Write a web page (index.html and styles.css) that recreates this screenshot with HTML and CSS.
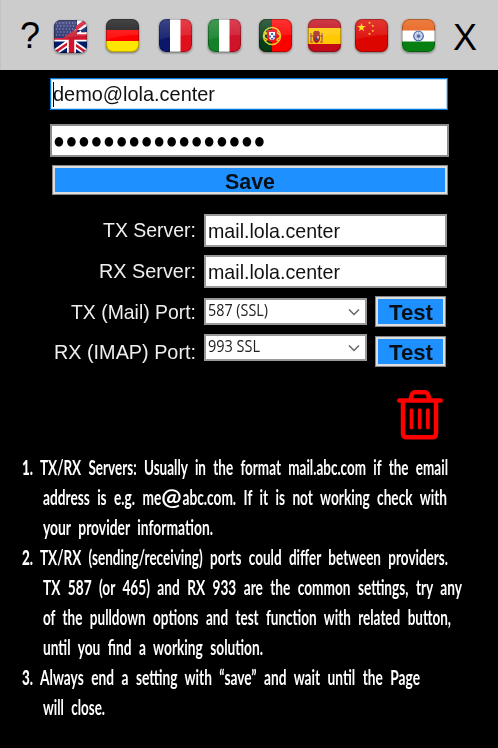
FILE: index.html
```html
<!DOCTYPE html>
<html lang="en">
<head>
<meta charset="utf-8">
<title>Mail settings</title>
<link rel="stylesheet" href="styles.css">
</head>
<body>
<svg class="defs" width="0" height="0" aria-hidden="true">
  <defs>
    <clipPath id="round"><rect width="33" height="33" rx="7"/></clipPath>
    <linearGradient id="gloss" x1="0" y1="0" x2="0" y2="1">
      <stop offset="0" stop-color="#fff" stop-opacity=".2"/>
      <stop offset="1" stop-color="#fff" stop-opacity=".06"/>
    </linearGradient>
    <g id="shine">
      <path d="M0 0H33V16Q16 16 0 21Z" fill="url(#gloss)"/>
      <rect x=".5" y=".5" width="32" height="32" rx="7" fill="none" stroke="#000" stroke-opacity=".25"/>
    </g>
    <path id="star" d="M0-1 .23-.31 .95-.31 .36 .12 .59 .81 0 .38-.59 .81-.36 .12-.95-.31-.23-.31Z"/>
  </defs>
</svg>
<header class="bar">
  <span class="sign help">?</span>
  <svg class="flag uk" viewBox="0 0 33 33"><g clip-path="url(#round)">
    <rect width="33" height="33" fill="#001b69"/>
    <path d="M0 10 33 33M33 10 0 33" stroke="#fff" stroke-width="6"/>
    <path d="M0 10 33 33M33 10 0 33" stroke="#d0142c" stroke-width="2.500"/>
    <path d="M23 0 H33V10H23Z" fill="#fff"/><path d="M22 11 33 3V0H30L22 6Z" fill="#d0142c"/><path d="M27 10 33 6V12H27Z" fill="#001b69"/>
    <path d="M0 17H33M17.500 0V33" stroke="#fff" stroke-width="9"/>
    <path d="M0 17H33M17.500 0V33" stroke="#d0142c" stroke-width="5.500"/>
    <path d="M0 0H22V9L9 18H0Z" fill="#222967"/>
    <path d="M2 3H22M3 6H22M2 9H21M3 12H17M2 15H13" stroke="#9299cc" stroke-width="1.200" stroke-dasharray="1.200 2"/>
    <path d="M23 9 9 18H23Z" fill="#c51a2e"/>
    <use href="#shine"/></g></svg>
  <svg class="flag de" viewBox="0 0 33 33"><g clip-path="url(#round)">
    <rect width="33" height="33" fill="#171717"/><rect y="11" width="33" height="11" fill="#f00"/><rect y="22" width="33" height="11" fill="#ffe600"/>
    <use href="#shine"/></g></svg>
  <svg class="flag fr" viewBox="0 0 33 33"><g clip-path="url(#round)">
    <rect width="33" height="33" fill="#fff"/><rect width="11" height="33" fill="#0b1768"/><rect x="21.500" width="12" height="33" fill="#e0101d"/>
    <use href="#shine"/></g></svg>
  <svg class="flag it" viewBox="0 0 33 33"><g clip-path="url(#round)">
    <rect width="33" height="33" fill="#fff"/><rect width="11" height="33" fill="#148028"/><rect x="21.500" width="12" height="33" fill="#cf1329"/>
    <use href="#shine"/></g></svg>
  <svg class="flag pt" viewBox="0 0 33 33"><g clip-path="url(#round)">
    <rect width="33" height="33" fill="#f00"/><rect width="13" height="33" fill="#053d16"/>
    <g fill="none" stroke="#e6cd22" stroke-width="1.500"><circle cx="13" cy="17" r="8.500"/><ellipse cx="13" cy="17" rx="8" ry="4"/><path d="M5 13 20 22M6 22 20 12"/></g>
    <path d="M8 11H18V19Q17 23 13 23T8 19Z" fill="#e81420"/><path d="M10 13H16V19Q15 21 13 21T10 19Z" fill="#fff"/>
    <path d="M12.100 14h2v2h-2zM10 16.500h2v2h-2zM14 16.500h2v2h-2zM12.100 19h2v1.500h-2z" fill="#3157b3"/>
    <use href="#shine"/></g></svg>
  <svg class="flag es" viewBox="0 0 33 33"><g clip-path="url(#round)">
    <rect width="33" height="33" fill="#c20a18"/><rect y="9" width="33" height="16" fill="#ffc800"/>
    <path d="M3 14V22M14 14V22" stroke="#9b7870" stroke-width="1.600"/><path d="M2 17H5M12 17H15M2 23H5M12 23H15" stroke="#b12d22"/>
    <path d="M5 14Q6 11 8.500 12Q11 11 12 14L11.500 16H5.500Z" fill="#a63224"/><path d="M5 16H12V20Q11 24 8.500 24T5 20Z" fill="#a72a29"/><path d="M9 17H11V20H9Z" fill="#d5a0a0"/><circle cx="8.500" cy="20" r="1.300" fill="#384c87"/>
    <use href="#shine"/></g></svg>
  <svg class="flag cn" viewBox="0 0 33 33"><g clip-path="url(#round)">
    <rect width="33" height="33" fill="#dc0500"/>
    <g fill="#ffde00"><use href="#star" transform="translate(6.500 8.500) scale(4.500)"/><use href="#star" transform="translate(14.500 4) scale(1.600)"/><use href="#star" transform="translate(17.800 7) scale(1.600)"/><use href="#star" transform="translate(17.800 12) scale(1.600)"/><use href="#star" transform="translate(14.500 15) scale(1.600)"/></g>
    <use href="#shine"/></g></svg>
  <svg class="flag in" viewBox="0 0 33 33"><g clip-path="url(#round)">
    <rect width="33" height="33" fill="#fff"/><rect width="33" height="11.500" fill="#e75c12"/><rect y="22.500" width="33" height="11" fill="#078011"/>
    <circle cx="16.500" cy="17" r="4.800" fill="#d6dced" stroke="#4864a9" stroke-width="1.300"/><path d="M12 17H21M16.500 12.500V21.500M13.300 13.800 19.700 20.200M19.700 13.800 13.300 20.200" stroke="#8799c9" stroke-width=".6"/><circle cx="16.500" cy="17" r="1.800" fill="#4864a9"/>
    <use href="#shine"/></g></svg>
  <span class="sign close">X</span>
</header>
<main>
  <div class="field mail"><i class="caret"></i><span class="fit" data-w="162">demo@lola.center</span></div>
  <div class="field pass"><span class="fit dots" data-w="213">●●●●●●●●●●●●●●●●●</span></div>
  <div class="button save"><span class="fit" data-w="50">Save</span></div>
  <div class="row server"><label><span class="fit" data-w="93">TX Server:</span></label><div class="field"><span class="fit" data-w="132">mail.lola.center</span></div></div>
  <div class="row server"><label><span class="fit" data-w="97">RX Server:</span></label><div class="field"><span class="fit" data-w="132">mail.lola.center</span></div></div>
  <div class="row port"><label><span class="fit" data-w="125">TX (Mail) Port:</span></label>
    <div class="select"><span class="fit" data-w="60">587 (SSL)</span><svg viewBox="0 0 12 8"><path d="M1 1.500 6 6.500 11 1.500"/></svg></div>
    <div class="button test"><span class="fit" data-w="44">Test</span></div></div>
  <div class="row port last"><label><span class="fit" data-w="142">RX (IMAP) Port:</span></label>
    <div class="select"><span class="fit" data-w="52">993 SSL</span><svg viewBox="0 0 12 8"><path d="M1 1.500 6 6.500 11 1.500"/></svg></div>
    <div class="button test"><span class="fit" data-w="44">Test</span></div></div>
  <svg class="trash" viewBox="0 0 46 50"><path d="M2.300 10.500H43.700M13.500 9.500 15 4.500Q16 2.300 18 2.300H28Q30 2.300 31 4.500L32.500 9.500M6 11V43.500Q6 47.300 9.800 47.300H35.200Q39 47.300 39 43.500V11"/><path class="slot" d="M14.500 20V37.500M22.700 20V37.500M30.900 20V37.500"/></svg>
</main>
<section class="notes">
  <div class="line first"><b><span class="fit" data-w="11">1.</span></b><span class="fit" data-w="408">TX/RX Servers: Usually in the format mail.abc.com if the email</span></div>
  <div class="line"><span class="fit" data-w="404">address is e.g. me<span class="at">@</span>abc.com. If it is not working check with</span></div>
  <div class="line"><span class="fit" data-w="170">your provider information.</span></div>
  <div class="line first"><b><span class="fit" data-w="11">2.</span></b><span class="fit" data-w="408">TX/RX (sending/receiving) ports could differ between providers.</span></div>
  <div class="line"><span class="fit" data-w="419">TX 587 (or 465) and RX 933 are the common settings, try any</span></div>
  <div class="line"><span class="fit" data-w="408">of the pulldown options and test function with related button,</span></div>
  <div class="line"><span class="fit" data-w="220">until you find a working solution.</span></div>
  <div class="line first"><b><span class="fit" data-w="11">3.</span></b><span class="fit" data-w="380">Always end a setting with “save” and wait until the Page</span></div>
  <div class="line"><span class="fit" data-w="62">will close.</span></div>
</section>
<script src="fit.js"></script>
</body>
</html>
```
FILE: styles.css
```css
* { box-sizing: border-box; }
body { margin: 0; width: 498px; height: 748px; overflow: hidden; background: #000; font: 21px "Liberation Sans", sans-serif; color: #111; }
.defs { position: absolute; }
.bar { display: flex; height: 70px; padding: 19px 0 0 19px; background: #ccc; border-left: 1px solid #c2c2c2; color: #000; }
.sign { font-size: 36px; line-height: 36px; width: 20px; flex: none; }
.help { margin-top: -1px; }
.close { width: 24px; margin: 1px 0 0 18px; }
.flag { width: 33px; height: 33px; flex: none; overflow: visible; filter: drop-shadow(0 1px 1px rgba(0,0,0,.45)); }
.uk { margin: 1px 0 0 14px; }
.de { margin-left: 19px; }
.fr { margin-left: 20px; }
.it { margin-left: 16px; }
.pt { margin-left: 18px; }
.es { margin-left: 16px; }
.cn { margin-left: 14px; }
.in { margin-left: 14px; }
main { display: flex; flex-direction: column; padding: 8px 0 0 50px; height: 382px; }
.fit { display: inline-block; flex: none; white-space: pre; transform-origin: 0 50%; }
.field { display: flex; align-items: center; height: 33px; background: #fff; border: 2px solid #999; padding-left: 2px; overflow: hidden; }
.mail { width: 398px; height: 32px; border: 1px solid #0078d7; box-shadow: inset 0 0 0 1px #b8dcf8; }
.caret { width: 1px; height: 25px; margin-right: -1px; background: #000; }
.pass { width: 399px; margin: 14px 0 0; border-color: #8c8c8c; }
.dots { font: 12.5px "DejaVu Sans", sans-serif; color: #000; letter-spacing: 3px; }
.button { display: flex; align-items: center; justify-content: center; background: #1e90ff; border: 3px solid #dedede; outline: 1px solid #888; outline-offset: -1px; font: bold 22px "Liberation Sans", sans-serif; color: #051018; }
.save { width: 396px; height: 30px; margin: 8px 0 19px 2px; padding-top: 3px; }
.row { display: flex; width: 397px; }
.row label { display: flex; justify-content: flex-end; width: 146px; margin-right: 8px; color: #eee; }
.server { height: 33px; margin-bottom: 8px; }
.server label { padding-top: 4px; }
.server .field { width: 243px; }
.port { height: 40px; margin-top: 1px; }
.port label { padding-top: 3px; }
.port .select { margin-top: 1px; }
.last { margin-top: -1px; }
.last label { padding-top: 4px; }
.last .select { margin-top: -2px; }
.last .button { margin-top: 0; }
.select { display: flex; align-items: center; justify-content: space-between; width: 163px; height: 27px; padding: 0 5px 3px 2px; background: #fff; border: 2px solid #999; font: 16px "Open Sans", sans-serif; color: #222; }
.select svg { width: 12px; height: 8px; margin-top: 3px; fill: none; stroke: #666; stroke-width: 1.5; }
.test { width: 71px; height: 31px; margin: -1px 0 0 8px; padding-top: 2px; }
.trash { width: 46px; height: 50px; margin: 14px 0 0 347px; fill: none; stroke: #f00; stroke-width: 4.5; stroke-linecap: round; }
.trash .slot { stroke-width: 3.7; }
.notes { padding-left: 22px; font: bold 20px/30px Lato, sans-serif; color: #fff; word-spacing: 6px; }
.line { display: flex; height: 30px; padding-left: 21px; }
.first { padding-left: 0; }
.line b { width: 18px; flex: none; }
.at { display: inline-block; width: 31px; height: 30px; font-size: 22px; transform: scaleX(1.6); transform-origin: 0 50%; }
```
FILE: fit.js
```js
// Condense each text run to its intended width.
document.querySelectorAll(".fit").forEach(function (el) {
  var natural = el.getBoundingClientRect().width;
  var wanted = Number(el.dataset.w);
  el.style.transform = "scaleX(" + wanted / natural + ")";
  el.style.marginRight = wanted - natural + "px";
});
```
